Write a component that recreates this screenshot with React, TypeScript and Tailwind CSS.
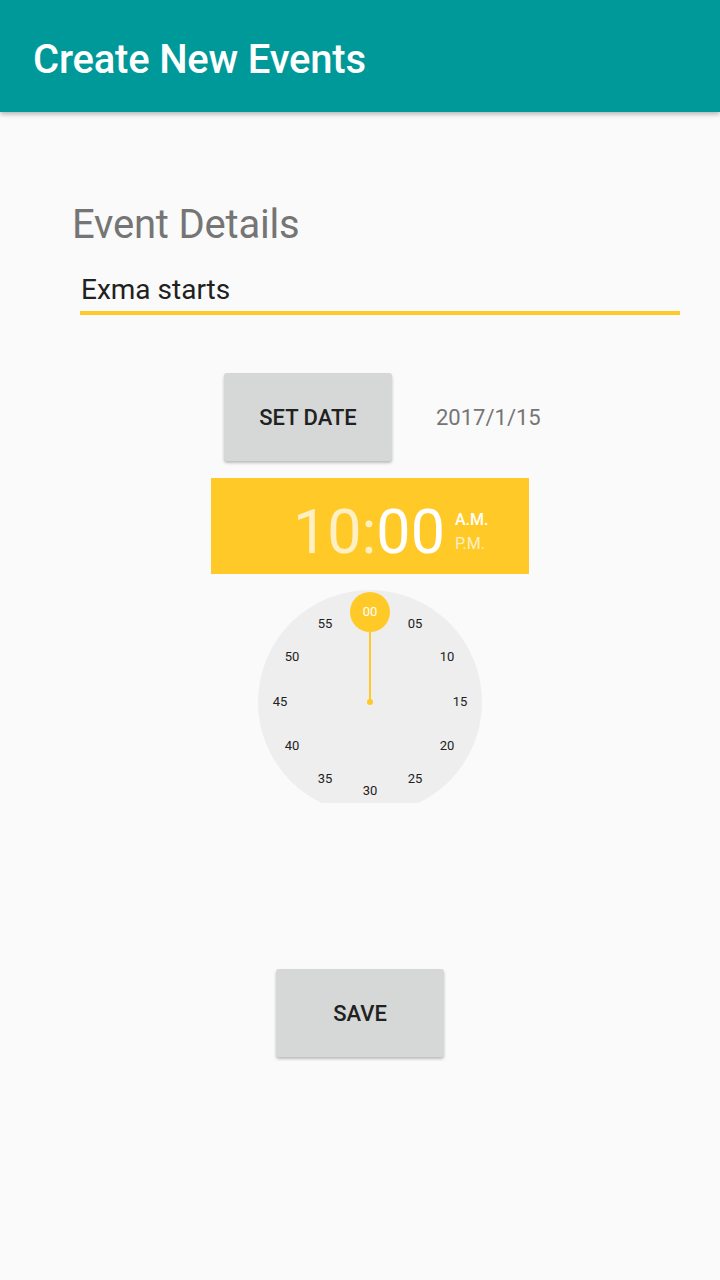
import React from "react";

const nums: { t: string; x: number; y: number }[] = [
  { t: "05", x: 415, y: 624 },
  { t: "10", x: 447, y: 657 },
  { t: "15", x: 460, y: 702 },
  { t: "20", x: 447, y: 746 },
  { t: "25", x: 415, y: 779 },
  { t: "30", x: 370, y: 791 },
  { t: "35", x: 325, y: 779 },
  { t: "40", x: 292, y: 746 },
  { t: "45", x: 280, y: 702 },
  { t: "50", x: 292, y: 657 },
  { t: "55", x: 325, y: 624 },
];

export default function App() {
  const cx0 = 258;
  const cy0 = 590;
  return (
    <div
      className="w-[720px] h-[1280px] bg-[#fafafa] flex flex-col overflow-hidden"
      style={{ fontFamily: "Roboto, 'Noto Sans', sans-serif" }}
    >
      <div className="h-[112px] bg-[#009999] flex items-center pl-[33px] pt-[7px] shadow-[0_2px_5px_rgba(0,0,0,0.3)] relative z-10">
        <span className="text-white text-[40px] leading-[40px] font-medium tracking-[-0.2px]">Create New Events</span>
      </div>

      <div className="pl-[72px] pt-[93px] text-[40px] leading-[40px] text-[#757575] tracking-[-0.2px]">Event Details</div>

      <div className="ml-[80px] w-[600px] mt-[31px]">
        <div className="text-[28px] leading-[28px] text-[#212121] pl-[1px]">Exma starts</div>
        <div className="mt-[7px] h-[4px] bg-[#ffca28]" />
      </div>

      <div className="flex items-center mt-[58px] ml-[224px]">
        <div className="w-[168px] h-[88px] bg-[#d6d7d7] rounded-[3px] shadow-[0_2px_3px_rgba(0,0,0,0.25)] flex items-center justify-center text-[22px] font-medium text-[#212121]">
          SET DATE
        </div>
        <div className="ml-[44px] text-[22px] text-[#757575]">2017/1/15</div>
      </div>

      <div className="ml-[211px] mt-[17px] w-[318px] h-[96px] bg-[#ffca28] flex items-start pl-[82px] pt-[24px]">
        <div className="text-[61px] leading-[60px]">
          <span className="text-[#fff0c4]">10:</span>
          <span className="text-white">00</span>
        </div>
        <div className="ml-[10px] mt-[10px] flex flex-col text-[16px] leading-[16px] font-medium">
          <span className="text-white">A.M.</span>
          <span className="text-[#fff0c4] mt-[8px] font-normal">P.M.</span>
        </div>
      </div>

      <div className="ml-[258px] mt-[16px] w-[224px] h-[213px] overflow-hidden relative">
        <div className="absolute left-0 top-0 w-[224px] h-[224px] rounded-full bg-[#eeeeee]" />
        <div className="absolute left-[111px] top-[42px] w-[2px] h-[70px] bg-[#ffca28]" />
        <div className="absolute left-[109px] top-[109px] w-[6px] h-[6px] rounded-full bg-[#ffca28]" />
        <div className="absolute left-[92px] top-[2px] w-[40px] h-[40px] rounded-full bg-[#ffca28] flex items-center justify-center text-white text-[13px]">
          00
        </div>
        {nums.map((n) => (
          <div
            key={n.t}
            className="absolute w-[30px] h-[16px] -ml-[15px] -mt-[8px] flex items-center justify-center text-[13px] text-[#212121]"
            style={{ left: n.x - cx0, top: n.y - cy0 }}
          >
            {n.t}
          </div>
        ))}
      </div>

      <div className="ml-[276px] mt-[166px] w-[168px] h-[88px] bg-[#d6d7d7] rounded-[3px] shadow-[0_2px_3px_rgba(0,0,0,0.25)] flex items-center justify-center text-[22px] font-medium text-[#212121]">
        SAVE
      </div>
    </div>
  );
}
